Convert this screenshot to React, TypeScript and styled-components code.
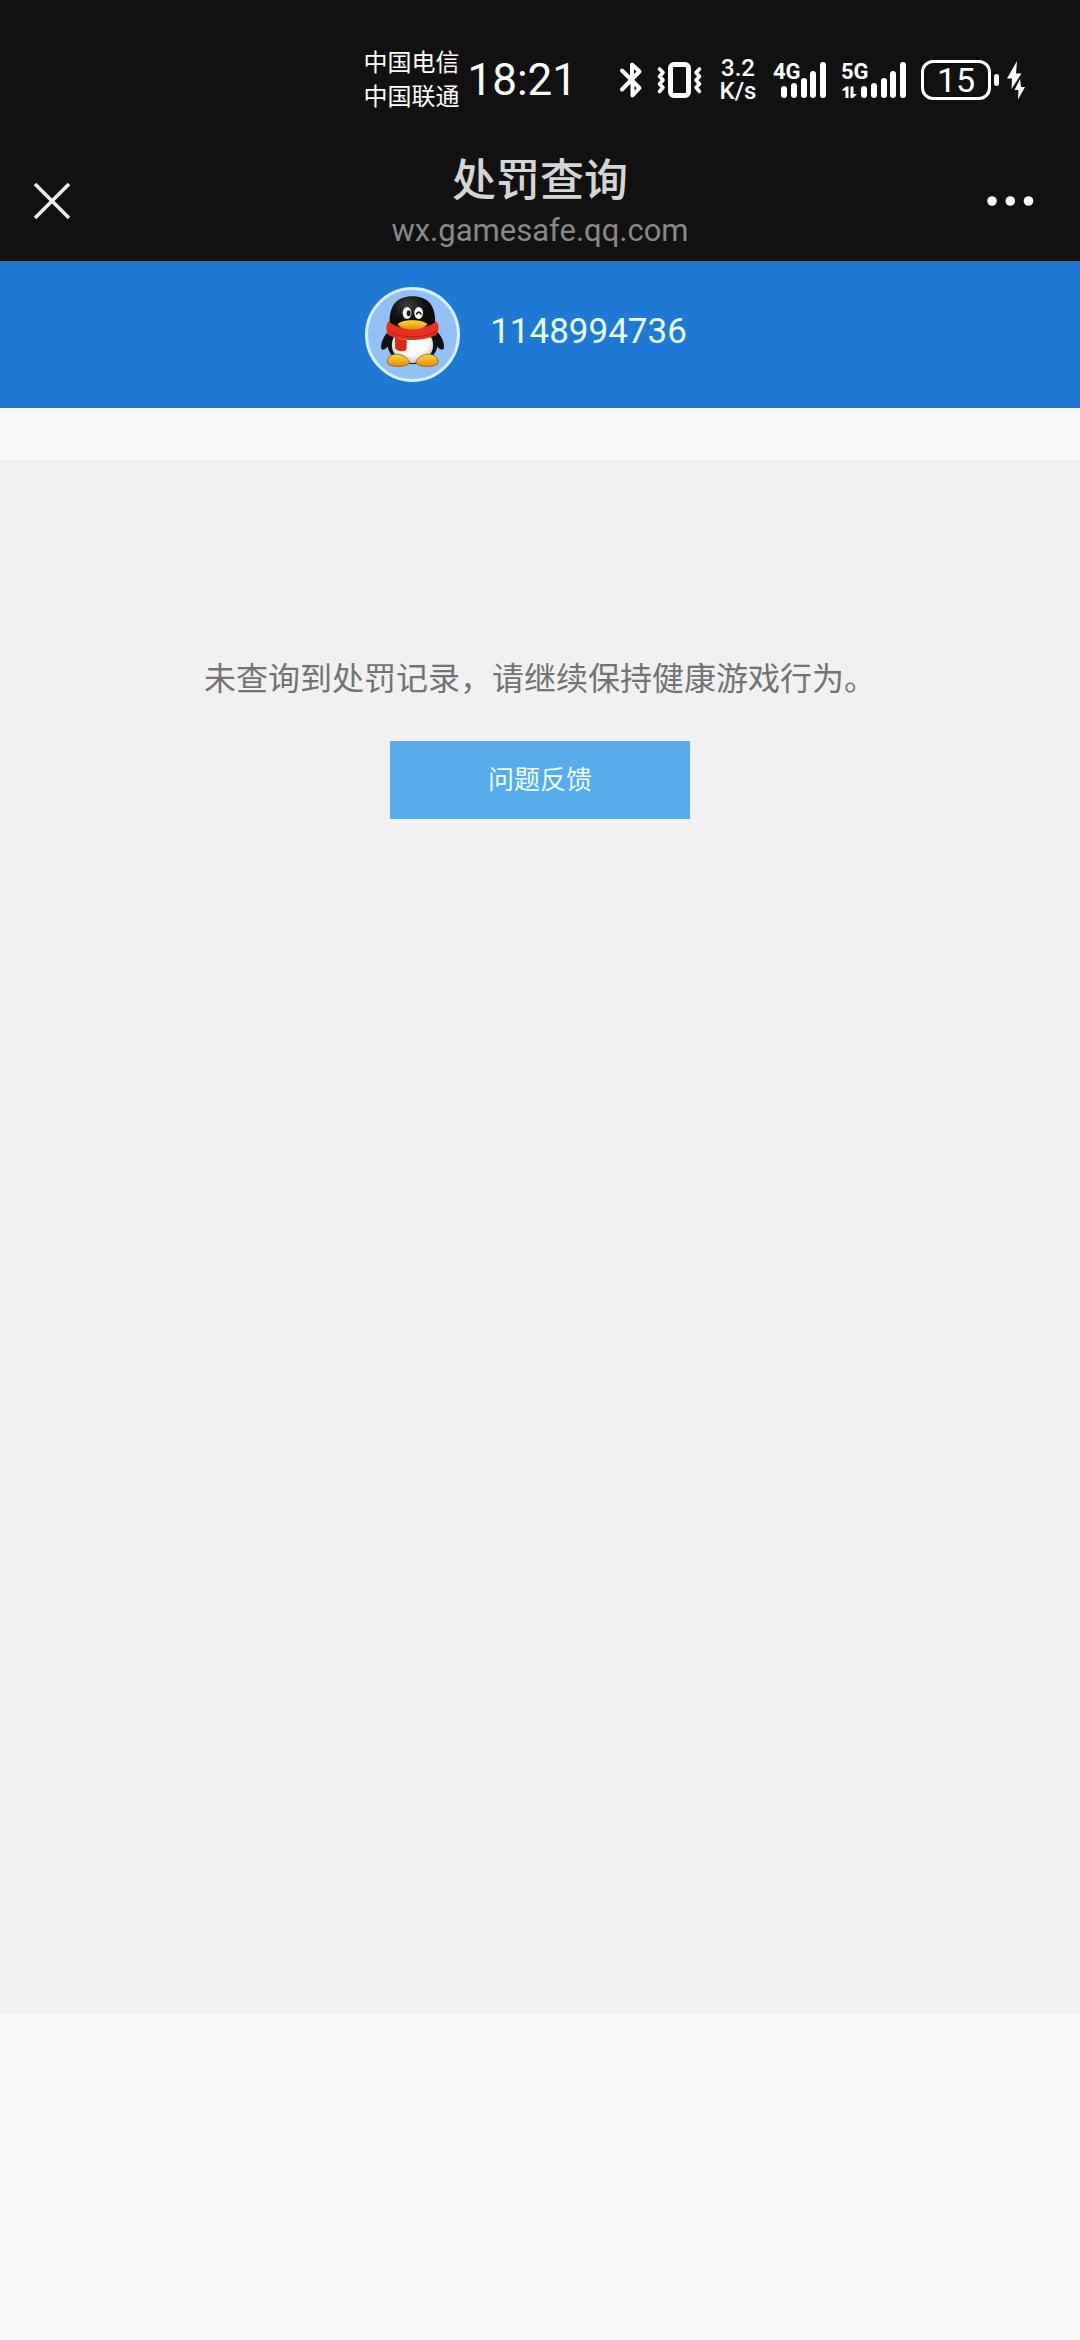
import * as React from 'react';
import styled, { createGlobalStyle } from 'styled-components';

type SignalProps = {
  label: string;
  width: number;
  offset: number;
  transfer?: boolean;
}

const bars = [
  { x: 0, top: 24 },
  { x: 10, top: 21 },
  { x: 20, top: 16 },
  { x: 29, top: 9 },
  { x: 39, top: 0 },
];

const App = () => {
  return (
    <Page>
      <GlobalStyle />
      <TopBar>
        <StatusBar>
          <Clock>
            <Carriers>
              <span>中国电信</span>
              <span>中国联通</span>
            </Carriers>
            <Time>18:21</Time>
          </Clock>
          <StatusIcons>
            <BluetoothIcon />
            <VibrateIcon />
            <Speed>
              <span>3.2</span>
              <span>K/s</span>
            </Speed>
            <Signal label="4G" width={54} offset={8} />
            <Signal label="5G" width={70} offset={22} transfer />
            <Power>
              <Battery>15</Battery>
              <BatteryTip />
              <BoltIcon />
            </Power>
          </StatusIcons>
        </StatusBar>
        <NavBar>
          <NavButton type="button" aria-label="关闭">
            <svg width="36" height="36" viewBox="0 0 36 36">
              <path d="M1 1L35 35M35 1L1 35" stroke="#ebebeb" strokeWidth="3.6" />
            </svg>
          </NavButton>
          <Heading>
            <Title>处罚查询</Title>
            <Host>wx.gamesafe.qq.com</Host>
          </Heading>
          <NavButton type="button" aria-label="更多">
            <svg width="48" height="12" viewBox="0 0 48 12" fill="#ffffff">
              <circle cx="6" cy="6" r="4.8" />
              <circle cx="24.3" cy="6" r="4.8" />
              <circle cx="42.5" cy="6" r="4.8" />
            </svg>
          </NavButton>
        </NavBar>
      </TopBar>
      <Account>
        <Avatar />
        <AccountId>1148994736</AccountId>
      </Account>
      <Content>
        <Message>未查询到处罚记录，请继续保持健康游戏行为。</Message>
        <Feedback type="button">问题反馈</Feedback>
      </Content>
    </Page>
  );
};

export default App;

const BluetoothIcon = () => (
  <svg width="24" height="38" viewBox="0 0 24 38" fill="none" stroke="#ffffff" strokeWidth="4" strokeLinecap="round" strokeLinejoin="round">
    <path d="M3 9.5L20.5 27L13.5 34.5V23M3 28.5L20.5 10.5L13 3.5V18" />
  </svg>
);

const VibrateIcon = () => (
  <svg width="48" height="38" viewBox="0 0 48 38" fill="none" stroke="#ffffff" strokeLinecap="round" strokeLinejoin="round">
    <rect x="15.5" y="3.5" width="18" height="31" rx="3.5" strokeWidth="5" />
    <path d="M4.5 8L8 11.5L4.5 15.5L8 19L4.5 23L8 26.5L4.5 30.5" strokeWidth="3.6" />
    <path d="M44.5 8L41 11.5L44.5 15.5L41 19L44.5 23L41 26.5L44.5 30.5" strokeWidth="3.6" />
  </svg>
);

const Signal = ({label, width, offset, transfer}: SignalProps) => (
  <svg width={width} height="38" viewBox={`0 0 ${width} 38`} fill="#ffffff">
    <SignalLabel x={transfer ? 2 : 0} y="18">{label}</SignalLabel>
    {bars.map(bar => (
      <rect key={bar.x} x={offset + bar.x} y={bar.top + 1} width="6" height={36 - bar.top} rx="3" />
    ))}
    {transfer && (
      <path d="M3 29L7 25.5H9.5V37H6.5V29.5H3ZM11.5 25.5H14.5V33H18L14 37H11.5Z" />
    )}
  </svg>
);

const BoltIcon = () => (
  <svg width="18" height="40" viewBox="0 0 18 40" fill="#ffffff">
    <path d="M10 1L0 18.5H5L4.5 29L14.5 13.5H9Z" />
    <path d="M13 19L7.5 30H11.5L11 39.5L18 27H14Z" />
  </svg>
);

const Avatar = () => (
  <svg width="95" height="95" viewBox="45 37 285 285">
    <defs>
      <radialGradient id="head" cx="0.4" cy="0.25" r="0.7">
        <stop offset="0" stopColor="#3a3d40" />
        <stop offset="0.6" stopColor="#0c0c0e" />
      </radialGradient>
      <radialGradient id="belly" cx="0.5" cy="0.4" r="0.6">
        <stop offset="0.6" stopColor="#ffffff" />
        <stop offset="1" stopColor="#c9c9cc" />
      </radialGradient>
      <linearGradient id="beak" x1="0" y1="0" x2="0" y2="1">
        <stop offset="0" stopColor="#ffd83a" />
        <stop offset="1" stopColor="#e48a08" />
      </linearGradient>
    </defs>
    <circle cx="187.5" cy="179.5" r="138" fill="#93c0f5" stroke="#d3f0ff" strokeWidth="9" />
    <path d="M118 168C102 180 90 208 94 222C98 230 110 222 122 206ZM258 168C274 180 286 208 281 222C277 230 265 222 253 206Z" fill="#111113" />
    <ellipse cx="187.5" cy="208" rx="75" ry="60" fill="#111113" />
    <ellipse cx="187.5" cy="211" rx="62" ry="54" fill="url(#belly)" />
    <path d="M120 160C112 92 142 65 187 65C232 65 262 92 254 160C240 178 134 178 120 160Z" fill="url(#head)" />
    <ellipse cx="171" cy="115" rx="13" ry="18" fill="#ffffff" />
    <ellipse cx="206" cy="115" rx="13" ry="18" fill="#ffffff" />
    <ellipse cx="176" cy="116" rx="6" ry="9" fill="#151515" />
    <path d="M200 118Q206 107 213 118" fill="none" stroke="#151515" strokeWidth="5" strokeLinecap="round" />
    <path d="M113 255C116 240 136 236 151 240C166 244 180 256 178 265C174 278 112 280 112 263ZM262 255C259 240 239 236 224 240C209 244 196 256 198 265C202 278 264 280 264 263Z" fill="url(#beak)" stroke="#7d4a05" strokeWidth="2" />
    <path d="M116 139C140 168 234 168 258 139C267 150 269 166 260 177C232 202 142 202 112 177C107 163 108 150 116 139Z" fill="#e9301f" />
    <path d="M136 189C146 194 158 196 169 197L168 226C158 230 146 229 137 222Z" fill="#e02a1b" stroke="#a71b12" strokeWidth="2" />
    <path d="M118 170C148 192 226 192 258 170" fill="none" stroke="#b92015" strokeWidth="3" />
    <path d="M143 149C154 133 220 133 232 149C218 170 156 170 143 149Z" fill="url(#beak)" />
  </svg>
);

const GlobalStyle = createGlobalStyle`
  body {
    margin: 0;
    background: #f7f7f7;
    font-family: Roboto, "Noto Sans CJK SC", sans-serif;
  }
  svg {
    display: block;
    flex: none;
    overflow: visible;
  }
`;

const Page = styled.div`
  box-sizing: border-box;
  display: flex;
  flex-direction: column;
  min-height: 100vh;
  padding-bottom: 326px;
`;

const TopBar = styled.header`
  background: #111111;
`;

const StatusBar = styled.div`
  box-sizing: border-box;
  display: flex;
  align-items: center;
  justify-content: flex-end;
  gap: 42px;
  height: 140px;
  padding: 19px 55px 0 0;
  color: #ffffff;
`;

const Clock = styled.div`
  display: flex;
  align-items: center;
  gap: 8px;
`;

const Carriers = styled.div`
  display: flex;
  flex-direction: column;
  font-size: 24px;
  line-height: 34px;
`;

const Time = styled.time`
  font-size: 44px;
  line-height: 54px;
`;

const StatusIcons = styled.div`
  display: flex;
  align-items: center;
  gap: 12px;
`;

const Speed = styled.div`
  display: flex;
  flex-direction: column;
  align-items: center;
  width: 46px;
  font-size: 24px;
  font-weight: 500;
  line-height: 23px;
`;

const SignalLabel = styled.text`
  font-size: 22px;
  font-weight: 700;
`;

const Power = styled.div`
  display: flex;
  align-items: center;
`;

const Battery = styled.div`
  box-sizing: border-box;
  width: 70px;
  height: 40px;
  border: 3px solid #ffffff;
  border-radius: 12px;
  font-size: 34px;
  line-height: 35px;
  text-align: center;
`;

const BatteryTip = styled.div`
  width: 5px;
  height: 12px;
  margin: 0 8px 0 3px;
  border-radius: 3px;
  background: #ffffff;
`;

const NavBar = styled.div`
  box-sizing: border-box;
  display: flex;
  align-items: center;
  justify-content: space-between;
  height: 121px;
  padding: 0 46px 0 34px;
`;

const NavButton = styled.button`
  display: flex;
  width: 48px;
  margin: 0;
  padding: 0;
  border: 0;
  background: none;
  cursor: pointer;
`;

const Heading = styled.div`
  display: flex;
  flex-direction: column;
  align-items: center;
  padding-left: 12px;
`;

const Title = styled.h1`
  margin: 0;
  color: #d5d5d5;
  font-size: 44px;
  font-weight: 500;
  line-height: 60px;
`;

const Host = styled.div`
  color: #888888;
  font-size: 31px;
  line-height: 40px;
`;

const Account = styled.section`
  box-sizing: border-box;
  display: flex;
  align-items: center;
  justify-content: center;
  gap: 30px;
  height: 147px;
  padding-right: 28px;
  background: #1f78d4;
`;

const AccountId = styled.span`
  padding-bottom: 6px;
  color: #e9ffff;
  font-size: 35px;
  line-height: 42px;
`;

const Content = styled.main`
  display: flex;
  flex: 1;
  flex-direction: column;
  align-items: center;
  gap: 38px;
  margin-top: 52px;
  padding-top: 195px;
  background: #f1f1f1;
`;

const Message = styled.p`
  margin: 0;
  color: #737373;
  font-size: 32px;
  line-height: 48px;
`;

const Feedback = styled.button`
  width: 300px;
  height: 78px;
  padding: 0 0 6px;
  border: 0;
  background: #57abeb;
  color: #f0ffff;
  font-family: inherit;
  font-size: 26px;
  cursor: pointer;
`;
